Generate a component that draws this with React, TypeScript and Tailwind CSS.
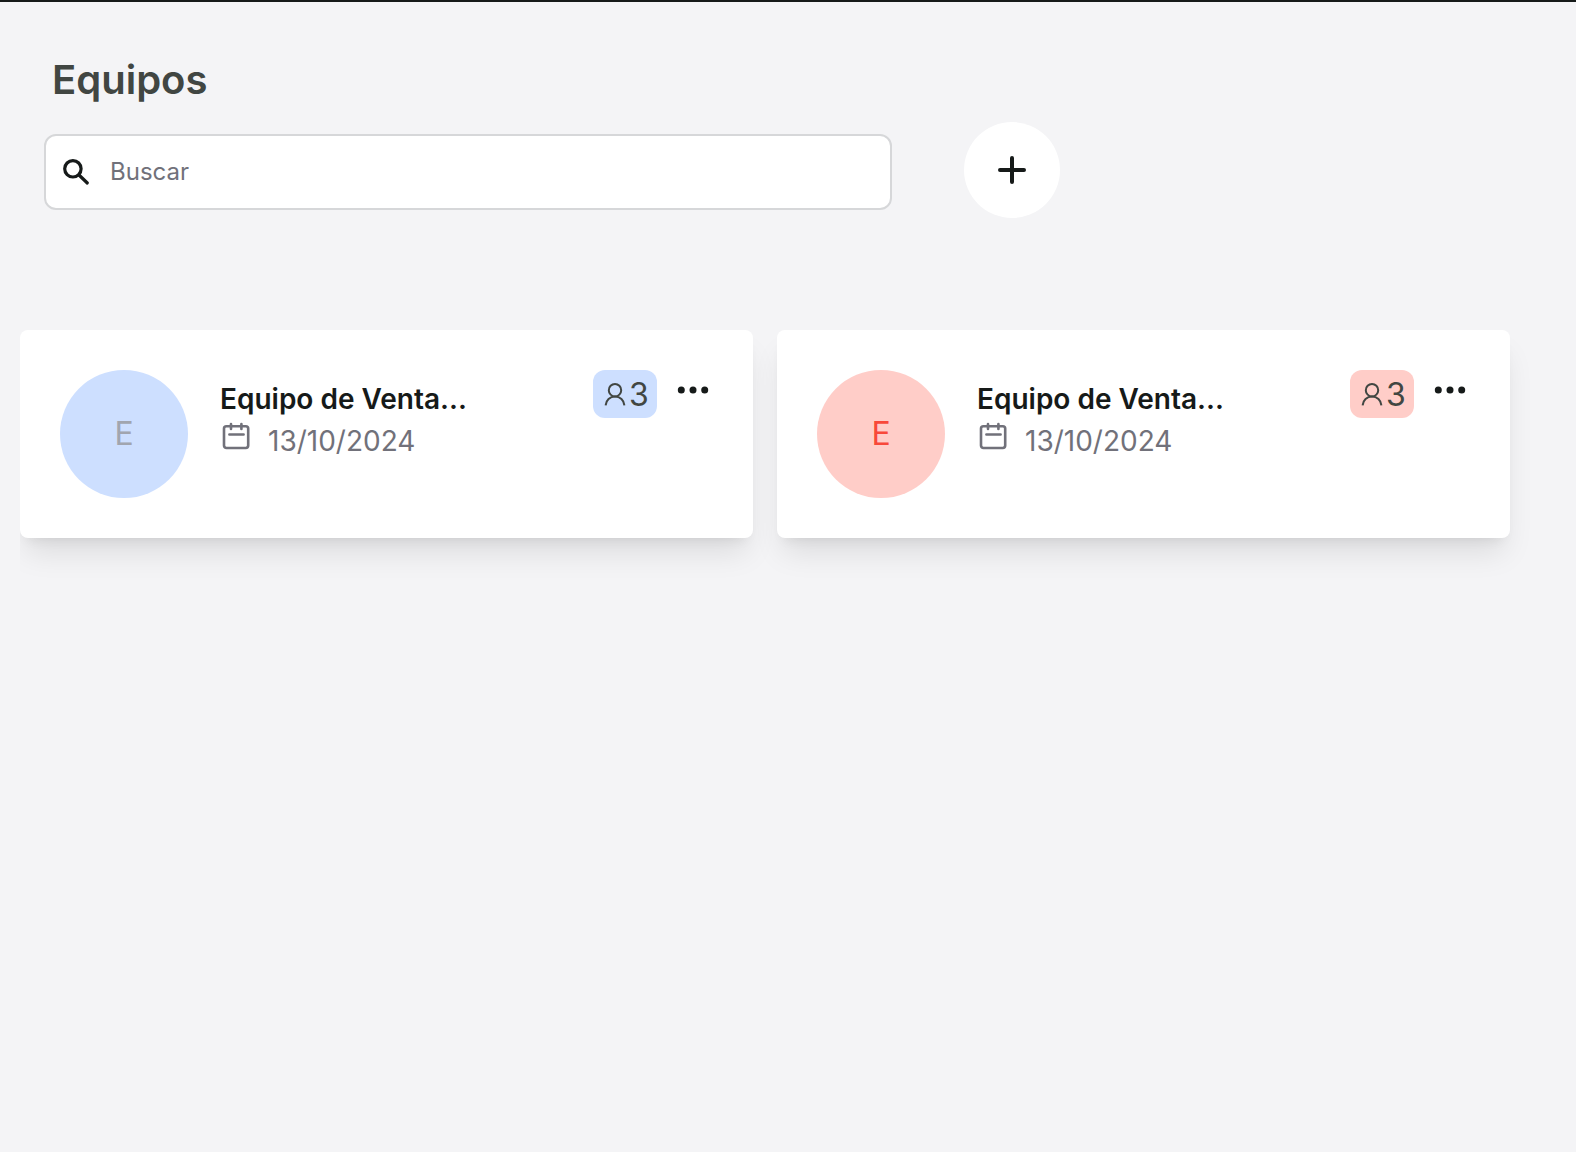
import React from "react";

type Team = {
  id: number;
  name: string;
  date: string;
  members: number;
  tint: string;
  initial: string;
};

const teams: Team[] = [
  { id: 1, name: "Equipo de Venta...", date: "13/10/2024", members: 3, tint: "bg-[#cddfff]", initial: "text-[#a1a5af]" },
  { id: 2, name: "Equipo de Venta...", date: "13/10/2024", members: 3, tint: "bg-[#ffcdc8]", initial: "text-[#f8483a]" },
];

function SearchIcon() {
  return (
    <svg viewBox="0 0 32 32" className="size-8 shrink-0" fill="none" stroke="#161a19" strokeLinecap="round" aria-hidden="true">
      <circle cx="12.9" cy="12.8" r="8.2" strokeWidth="3.2" />
      <path d="M19 19 L27.3 27" strokeWidth="3.2" />
    </svg>
  );
}

function PlusIcon() {
  return (
    <svg viewBox="0 0 32 32" className="size-8" fill="none" stroke="#161a19" strokeWidth="4" strokeLinecap="round" aria-hidden="true">
      <path d="M16 4v24M4 16h24" />
    </svg>
  );
}

function CalendarIcon() {
  return (
    <svg viewBox="0 0 32 32" className="size-8 shrink-0" fill="none" stroke="currentColor" strokeWidth="2.6" strokeLinecap="round" aria-hidden="true">
      <rect x="4" y="6.2" width="24.200" height="21.8" rx="2.4" />
      <path d="M11 4v5M21.4 4v5M9.4 14.5h14.2" />
    </svg>
  );
}

function UserIcon() {
  return (
    <svg viewBox="0 0 24 24" className="size-6 shrink-0" fill="none" stroke="currentColor" strokeWidth="2" aria-hidden="true">
      <circle cx="12" cy="7.2" r="6.2" />
      <path d="M2.6 22.300c.4-5 4.300-8.900 9.400-8.900s9 3.900 9.400 8.900" />
    </svg>
  );
}

function DotsIcon() {
  return (
    <svg viewBox="0 0 40 40" className="size-10" fill="#161a19" aria-hidden="true">
      <circle cx="8.3" cy="20" r="3.5" />
      <circle cx="20" cy="20" r="3.5" />
      <circle cx="31.7" cy="20" r="3.5" />
    </svg>
  );
}

function TeamCard({ team }: { team: Team }) {
  return (
    <li className="flex gap-8 rounded-lg bg-white p-10 shadow-[0_20px_30px_-6px_rgba(0,0,0,0.1),0_8px_12px_-8px_rgba(0,0,0,0.1)]">
      <div className={`flex size-32 shrink-0 items-center justify-center rounded-full text-[32px] leading-none ${team.tint} ${team.initial}`}>
        {team.name.charAt(0)}
      </div>
      <div className="min-w-0 flex-1 pt-2 text-[28px] leading-[42px]">
        <h2 className="truncate font-semibold text-[#161a19]">{team.name}</h2>
        <div className="flex gap-4 text-[#71717a]">
          <CalendarIcon />
          <span>{team.date}</span>
        </div>
      </div>
      <div className="flex items-start gap-4">
        <div className={`flex h-12 w-16 items-center justify-center gap-0.5 rounded-xl pt-0.5 pl-0.5 text-[32px] leading-none text-[#414642] ${team.tint}`}>
          <UserIcon />
          <span>{team.members}</span>
        </div>
        <button type="button" aria-label="Opciones" className="size-10">
          <DotsIcon />
        </button>
      </div>
    </li>
  );
}

export default function App() {
  return (
    <main className="min-h-screen border-t-2 border-[#161a19] bg-[#f4f4f6] font-['Inter',sans-serif]">
      <header className="px-11 pt-12">
        <h1 className="px-2 text-[40px] leading-[60px] font-semibold text-[#414642]">Equipos</h1>
        <div className="mt-3 flex items-center gap-[72px]">
          <label className="mt-1 flex h-[76px] max-w-[848px] flex-1 items-center gap-[18px] rounded-xl border-2 border-[#d6d7d9] bg-white px-3.5">
            <SearchIcon />
            <input type="search" aria-label="Buscar" placeholder="Buscar" className="min-w-0 flex-1 text-2xl text-[#161a19] outline-none placeholder:text-[#71717a]" />
          </label>
          <button type="button" aria-label="Agregar equipo" className="flex size-24 shrink-0 items-center justify-center rounded-full bg-white">
            <PlusIcon />
          </button>
        </div>
      </header>
      <section className="mt-20 ml-5 overflow-hidden pt-8 pr-[66px] pb-16">
        <ul className="grid grid-cols-2 gap-6">
          {teams.map((team) => (
            <TeamCard key={team.id} team={team} />
          ))}
        </ul>
      </section>
    </main>
  );
}
